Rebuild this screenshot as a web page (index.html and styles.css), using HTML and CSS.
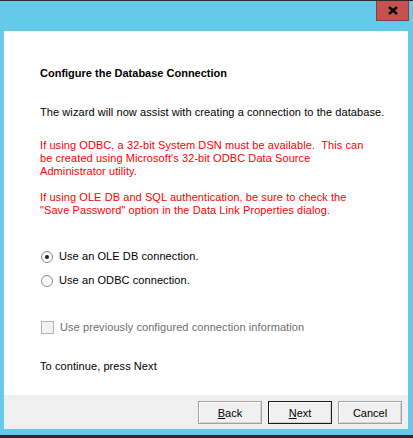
FILE: index.html
```html
<!DOCTYPE html>
<html lang="en">
<head>
    <meta charset="UTF-8">
    <title>Configure the Database Connection</title>
    <link rel="stylesheet" href="styles.css">
</head>
<body>
    <div class="window">
        <div class="title-bar">
            <button class="close-button" aria-label="Close">
                <svg width="10" height="9" viewBox="0 0 10 9">
                    <path d="M1 1 L9 8 M9 1 L1 8" stroke="#000" stroke-width="2.4" fill="none"/>
                </svg>
            </button>
        </div>

        <div class="client">
            <div class="page">
                <h1 class="page-title">Configure the Database Connection</h1>
                <p class="intro">The wizard will now assist with creating a connection to the database.</p>

                <p class="warning">If using ODBC, a 32-bit System DSN must be available.&nbsp; This can<br>be created using Microsoft's 32-bit ODBC Data Source<br>Administrator utility.</p>
                <p class="warning">If using OLE DB and SQL authentication, be sure to check the<br>"Save Password" option in the Data Link Properties dialog.</p>

                <div class="options">
                    <label class="radio-row">
                        <span class="radio checked"></span>
                        <span>Use an OLE DB connection.</span>
                    </label>
                    <label class="radio-row">
                        <span class="radio"></span>
                        <span>Use an ODBC connection.</span>
                    </label>
                </div>

                <label class="check-row disabled">
                    <span class="checkbox"></span>
                    <span>Use previously configured connection information</span>
                </label>

                <p class="continue">To continue, press Next</p>
            </div>

            <div class="footer">
                <button class="btn"><u>B</u>ack</button>
                <button class="btn default"><u>N</u>ext</button>
                <button class="btn">Cancel</button>
            </div>
        </div>
    </div>
</body>
</html>
```

FILE: styles.css
```css
body {
    margin: 0;
    font-family: 'Liberation Sans', Arial, sans-serif;
    font-size: 11px;
    line-height: 13px;
    letter-spacing: 0.08px;
    color: #000;
}
.window {
    width: 413px;
    height: 438px;
    box-sizing: border-box;
    background-color: #65c9ea;
    border-top: 1px solid #2b2b2b;
    border-bottom: 3px solid #2b2b2b;
    display: flex;
    flex-direction: column;
}
.title-bar {
    height: 30px;
    display: flex;
    justify-content: flex-end;
    align-items: flex-start;
    padding-right: 4px;
}
.close-button {
    width: 33px;
    height: 20px;
    margin: 0;
    padding: 0;
    background-color: #c75050;
    border: 1px solid #8e3b3b;
    border-top: none;
    display: flex;
    align-items: center;
    justify-content: center;
}
.client {
    margin: 0 5px 6px 4px;
    flex-grow: 1;
    display: flex;
    flex-direction: column;
    background-color: #fff;
}
.page {
    flex-grow: 1;
    padding: 36px 20px 0 36px;
}
.page p {
    margin: 0;
}
.page-title {
    margin: 0;
    font-size: 11px;
    font-weight: bold;
    letter-spacing: 0;
}
.intro {
    margin-top: 26px !important;
}
.warning {
    color: #ff0000;
    margin-top: 13px !important;
}
.intro + .warning {
    margin-top: 20px !important;
}
.options {
    margin-top: 33px;
    display: flex;
    flex-direction: column;
    gap: 11px;
}
.radio-row, .check-row {
    display: flex;
    align-items: center;
    gap: 6px;
    margin-left: 1px;
}
.radio {
    width: 10px;
    height: 10px;
    border: 1px solid #8a8a8a;
    border-radius: 50%;
    background: linear-gradient(#f4f4f4, #fff);
    display: flex;
    align-items: center;
    justify-content: center;
}
.radio.checked::after {
    content: "";
    width: 4px;
    height: 4px;
    border-radius: 50%;
    background-color: #1e1e1e;
}
.check-row {
    margin-top: 34px;
}
.check-row.disabled {
    color: #6d6d6d;
}
.checkbox {
    width: 11px;
    height: 11px;
    border: 1px solid #b5b5b5;
    background-color: #f2f2f2;
}
.continue {
    margin-top: 26px !important;
}
.footer {
    height: 34px;
    box-sizing: border-box;
    background-color: #f0f0f0;
    display: flex;
    justify-content: flex-end;
    align-items: flex-start;
    gap: 6px;
    padding: 6px 6px 0 0;
}
.btn {
    width: 64px;
    height: 23px;
    padding: 0;
    font-family: inherit;
    font-size: 11px;
    color: #000;
    background-color: #f0f0f0;
    border: 1px solid #a0a0a0;
    box-shadow: inset 1px 1px 0 #fff, inset -1px -1px 0 #d4d4d4;
}
.btn.default {
    border-color: #1a1a1a;
}
```
